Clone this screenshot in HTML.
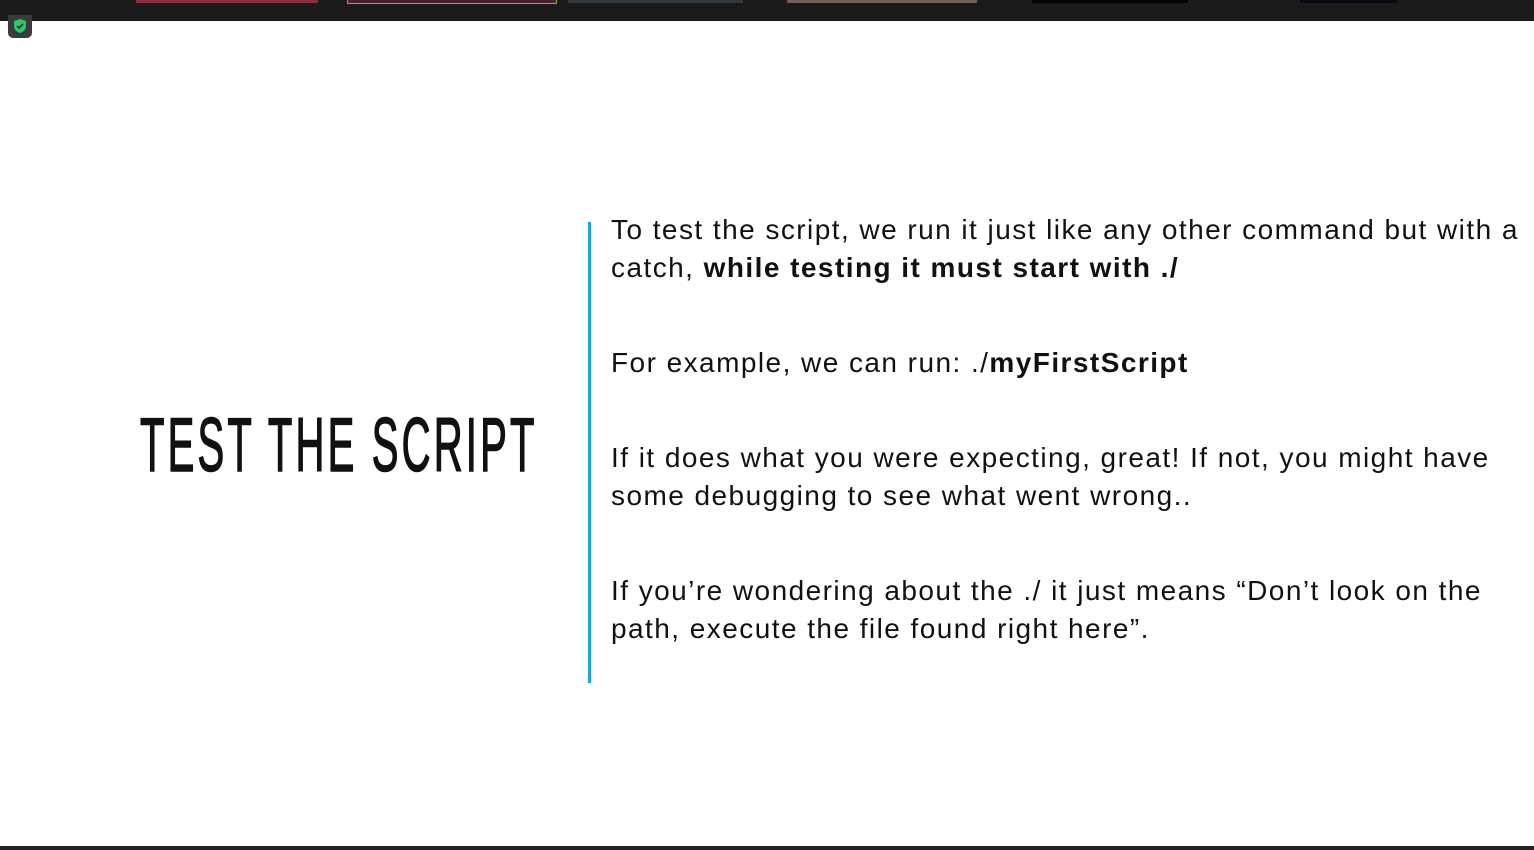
<!DOCTYPE html>
<html><head><meta charset="utf-8"><style>
body{margin:0;width:1534px;height:850px;background:#fff;position:relative;overflow:hidden;font-family:"Liberation Sans",sans-serif}
.top{position:absolute;left:0;top:0;width:1534px;height:21px;background:#1b1b1b}
.th{position:absolute;top:0;height:3px}
.shield{position:absolute;left:8px;top:15px;width:24px;height:23px;background:#3a3a3a;border-radius:0 0 5px 5px}
.bot{position:absolute;left:0;top:846px;width:1534px;height:4px;background:#222}
.title{position:absolute;left:140px;top:408px;font-size:76px;line-height:76px;color:#111;letter-spacing:6px;transform:scaleX(0.527);transform-origin:left top;white-space:nowrap;font-family:"Liberation Sans Narrow","Liberation Sans",sans-serif;-webkit-text-stroke:1.6px #111}
.bar{position:absolute;left:588px;top:222px;width:3px;height:461px;background:#1aa3e0}
.p{position:absolute;left:611px;font-size:28px;line-height:38px;color:#111;white-space:nowrap;letter-spacing:1.45px}
</style></head><body>
<div class="top">
<div class="th" style="left:136px;width:182px;background:#8a3040"></div>
<div class="th" style="left:347px;width:208px;background:#4a2030;border:1px solid #9ab020;top:-1px"></div>
<div class="th" style="left:568px;width:175px;background:#303840"></div>
<div class="th" style="left:787px;width:190px;background:#706058"></div>
<div class="th" style="left:1032px;width:156px;background:#050505"></div>
<div class="th" style="left:1300px;width:98px;background:#0a0a14"></div>
</div>
<div class="shield"><svg width="24" height="22" viewBox="0 0 24 22"><path d="M12 4l6 2v5c0 4-3 6-6 7c-3-1-6-3-6-7V6z" fill="#22cc66"/><path d="M9 11l2 2 4-4" stroke="#113" stroke-width="1.5" fill="none"/></svg></div>
<div class="title">TEST THE SCRIPT</div>
<div class="bar"></div>
<div class="p" style="top:211px">To test the script, we run it just like any other command but with a<br>catch, <b>while testing it must start with ./</b></div>
<div class="p" style="top:344px">For example, we can run: ./<b>myFirstScript</b></div>
<div class="p" style="top:439px">If it does what you were expecting, great! If not, you might have<br>some debugging to see what went wrong..</div>
<div class="p" style="top:572px">If you’re wondering about the ./ it just means “Don’t look on the<br>path, execute the file found right here”.</div>
<div class="bot"></div>
</body></html>
